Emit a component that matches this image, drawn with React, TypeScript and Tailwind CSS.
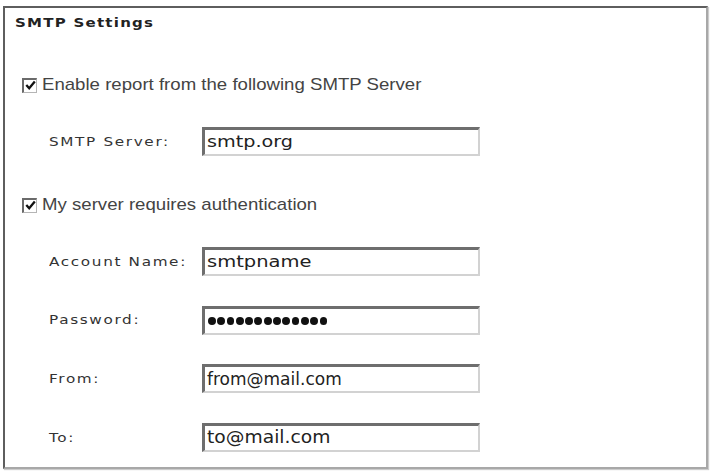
import React from "react";

function Check() {
  return (
    <span className="w-[15px] h-[15px] border-t-2 border-l-2 border-r border-b border-t-[#6a6a6a] border-l-[#6a6a6a] border-r-[#b5b5b5] border-b-[#b5b5b5] bg-white flex items-center justify-center shrink-0">
      <svg width="11" height="11" viewBox="0 0 11 11">
        <path d="M1.3 5 L4.2 8.3 L9.8 1.5" fill="none" stroke="#111" strokeWidth="2.3" />
      </svg>
    </span>
  );
}

function Box({ children }: { children: React.ReactNode }) {
  return (
    <div className="w-[278px] h-[29px] border-t-[3px] border-l-[3px] border-t-[#6e6e6e] border-l-[#6e6e6e] border-r-2 border-b-2 border-r-[#d2d2d2] border-b-[#d2d2d2] bg-white flex items-center pl-[2px] overflow-hidden">
      {children}
    </div>
  );
}

function Row({ label, children }: { label: string; children: React.ReactNode }) {
  return (
    <div className="flex items-center h-[29px]">
      <div className="w-[197px] pl-[44px] overflow-hidden">
        <div className="text-[12px] tracking-[1.3px] text-[#333] font-['DejaVu_Sans',sans-serif] whitespace-nowrap scale-x-[1.27] origin-left">
          {label}
        </div>
      </div>
      <Box>{children}</Box>
    </div>
  );
}

export default function App() {
  const dots = Array.from({ length: 13 });
  return (
    <div className="w-[712px] h-[476px] bg-white overflow-hidden">
      <div className="ml-[3px] mt-[6px] w-[705px] h-[463px] border-t-2 border-l-2 border-[#5e5e5e] border-r-2 border-b-2 border-r-[#a8a8a8] border-b-[#a8a8a8] shadow-[1px_1px_1px_#ccc] overflow-hidden">
        <div className="pl-[10px] pt-[7px] h-[23px]">
          <div className="text-[12px] font-bold tracking-[1px] text-[#222] font-['DejaVu_Sans',sans-serif] leading-[16px] scale-x-[1.25] origin-left whitespace-nowrap">
            SMTP Settings
          </div>
        </div>
        <div className="flex items-center gap-[5px] pl-[17px] mt-[46px] h-[16px]">
          <Check />
          <span className="text-[17px] text-[#444] font-['Liberation_Sans',sans-serif] scale-x-[1.095] origin-left whitespace-nowrap">
            Enable report from the following SMTP Server
          </span>
        </div>
        <div className="mt-[34px]">
          <Row label="SMTP Server:">
            <span className="text-[15px] text-[#222] font-['DejaVu_Sans',sans-serif] scale-x-[1.28] origin-left whitespace-nowrap">
              smtp.org
            </span>
          </Row>
        </div>
        <div className="flex items-center gap-[5px] pl-[17px] mt-[41px] h-[16px]">
          <Check />
          <span className="text-[17px] text-[#444] font-['Liberation_Sans',sans-serif] scale-x-[1.095] origin-left whitespace-nowrap">
            My server requires authentication
          </span>
        </div>
        <div className="mt-[34px] flex flex-col gap-[29.7px]">
          <Row label="Account Name:">
            <span className="text-[15px] text-[#222] font-['DejaVu_Sans',sans-serif] scale-x-[1.3] origin-left whitespace-nowrap">
              smtpname
            </span>
          </Row>
          <Row label="Password:">
            <div className="flex items-center gap-[1.5px] pl-[1px]">
              {dots.map((_, i) => (
                <span key={i} className="w-[7.8px] h-[7.8px] rounded-full bg-[#111]" />
              ))}
            </div>
          </Row>
          <Row label="From:">
            <span className="text-[17px] text-[#222] font-['DejaVu_Sans',sans-serif] whitespace-nowrap">
              from@mail.com
            </span>
          </Row>
          <Row label="To:">
            <span className="text-[17px] text-[#222] font-['DejaVu_Sans',sans-serif] scale-x-[1.1] origin-left whitespace-nowrap">
              to@mail.com
            </span>
          </Row>
        </div>
      </div>
    </div>
  );
}
